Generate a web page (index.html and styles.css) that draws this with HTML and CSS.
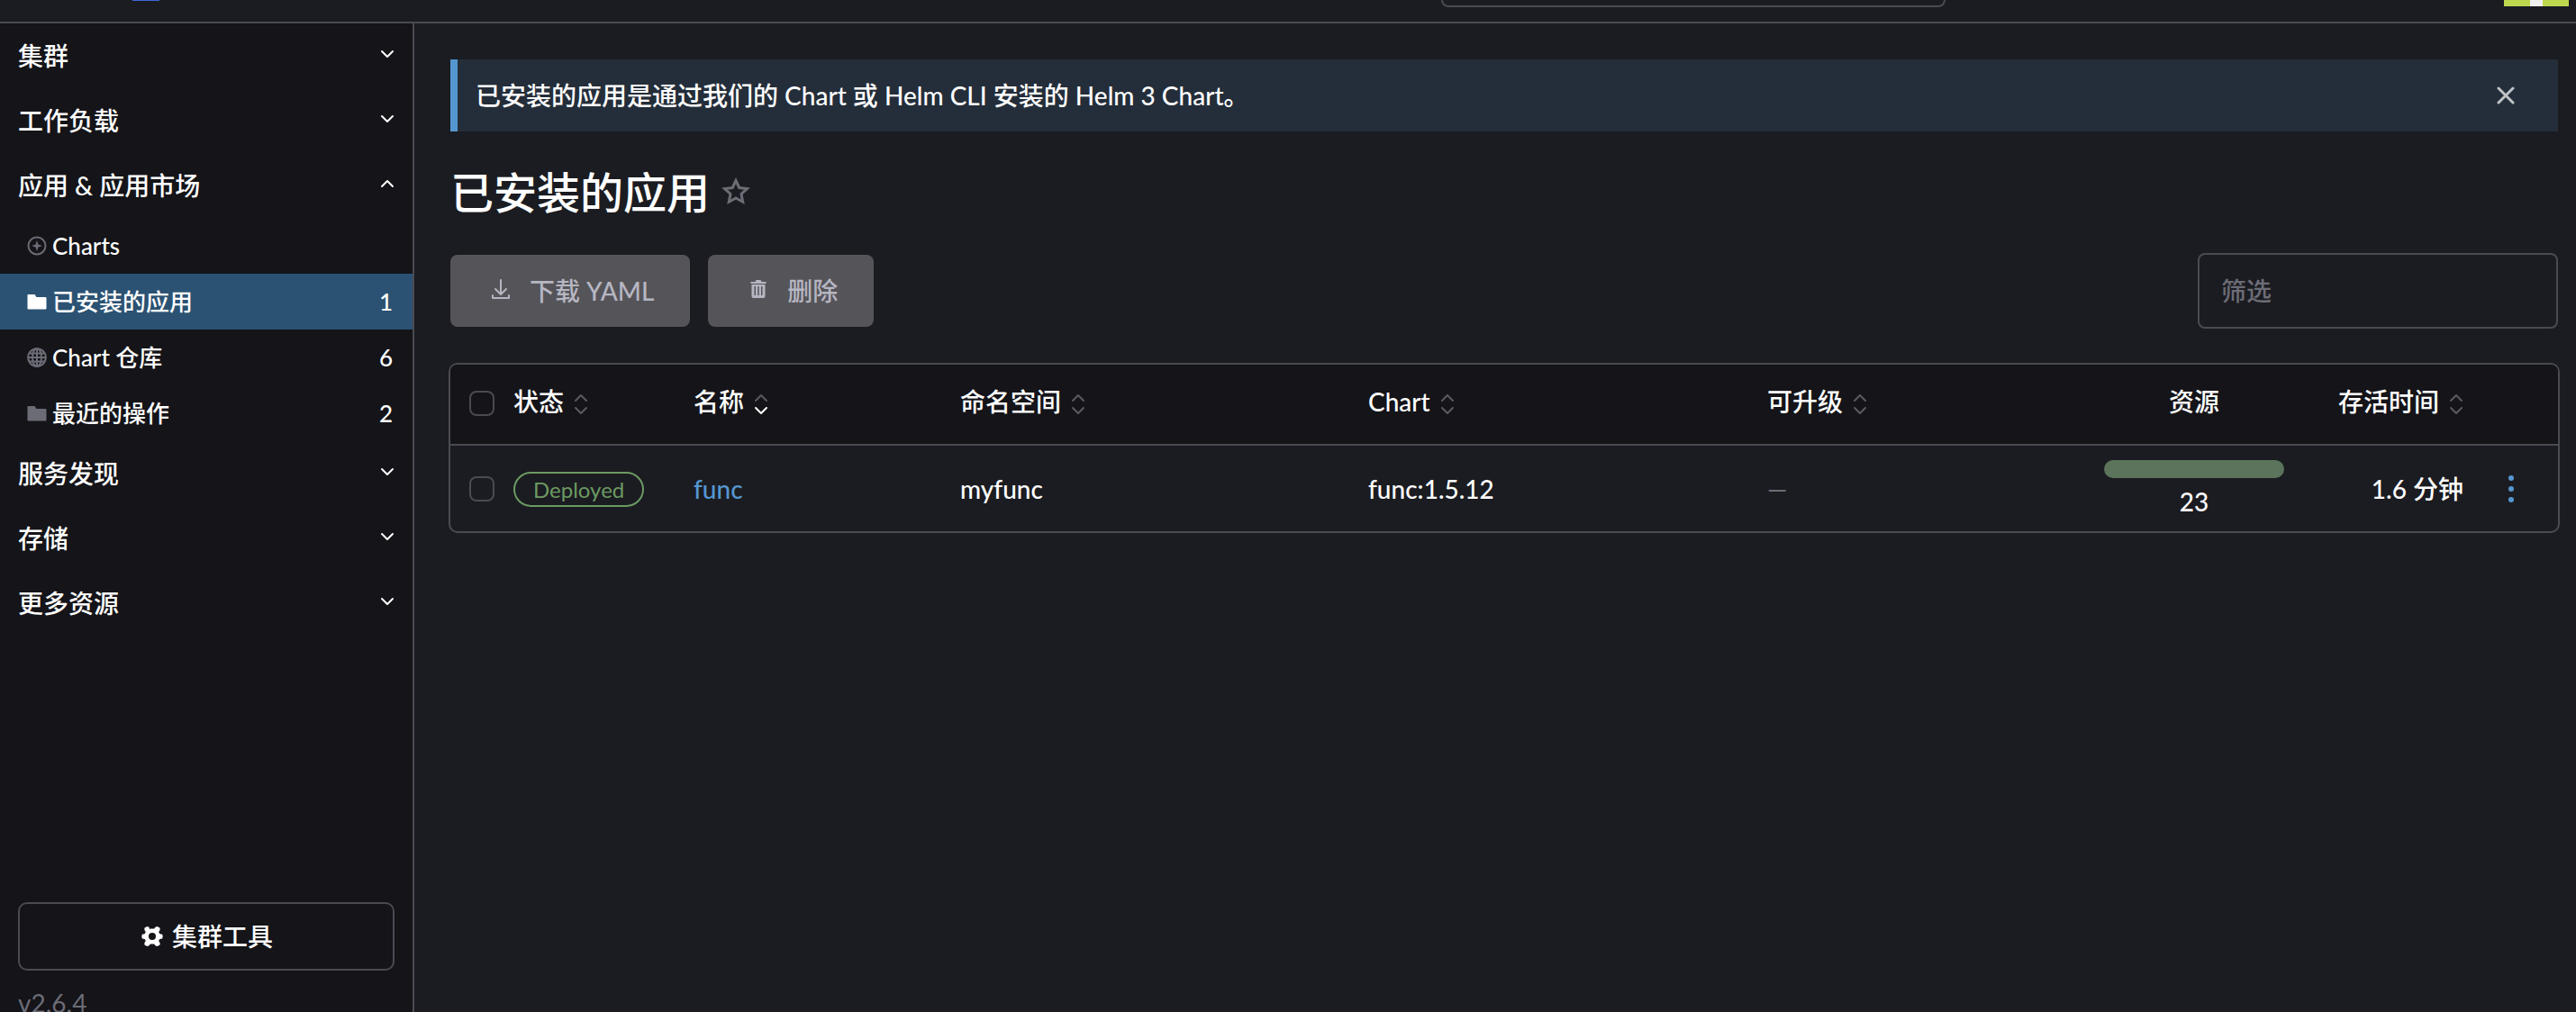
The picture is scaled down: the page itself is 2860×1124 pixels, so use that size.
FILE: index.html
```html
<!DOCTYPE html>
<html lang="zh-CN">
<head>
<meta charset="utf-8">
<meta name="viewport" content="width=device-width, initial-scale=1">
<title>已安装的应用</title>
<link rel="stylesheet" href="styles.css">
</head>
<body>
<svg class="sprite" aria-hidden="true">
  <symbol id="chevron" viewBox="0 0 16 10"><path d="M2 2l6 6 6-6" fill="none" stroke="currentColor" stroke-width="2" stroke-linecap="round" stroke-linejoin="round"/></symbol>
  <symbol id="folder" viewBox="0 0 22 18"><path d="M1 1h7.500l2 3H20.500a1 1 0 0 1 1 1V16.500a1 1 0 0 1-1 1H1.500a1 1 0 0 1-1-1V1.500z" fill="currentColor"/></symbol>
  <symbol id="sort" viewBox="0 0 16 24"><g fill="none" stroke-width="2" stroke-linecap="round" stroke-linejoin="round"><path class="sort-up" d="M2 8l6-6 6 6"/><path class="sort-down" d="M2 16l6 6 6-6"/></g></symbol>
</svg>
<div class="app">
  <header class="topbar">
    <span class="logo"></span>
    <select class="namespace-filter" aria-label="命名空间"></select>
    <span class="avatar"></span>
  </header>
  <nav class="sidebar">
    <button class="group" type="button">集群<svg class="chevron"><use href="#chevron"/></svg></button>
    <button class="group" type="button">工作负载<svg class="chevron"><use href="#chevron"/></svg></button>
    <button class="group" type="button" aria-expanded="true">应用 &amp; 应用市场<svg class="chevron open"><use href="#chevron"/></svg></button>
    <ul class="items">
      <li><a class="item" href="#charts">
        <svg class="item-icon" viewBox="0 0 22 22"><circle cx="11" cy="11" r="9.500" fill="none" stroke="currentColor" stroke-width="2"/><path d="M11 5l1.500 4.500L17 11l-4.500 1.500L11 17l-1.500-4.500L5 11l4.500-1.500z" fill="currentColor"/></svg>
        <span class="item-label">Charts</span></a></li>
      <li><a class="item active" href="#apps">
        <svg class="item-icon"><use href="#folder"/></svg>
        <span class="item-label">已安装的应用</span><span>1</span></a></li>
      <li><a class="item" href="#repos">
        <svg class="item-icon" viewBox="0 0 22 22"><g fill="none" stroke="currentColor" stroke-width="2"><circle cx="11" cy="11" r="9.800"/><ellipse cx="11" cy="11" rx="5" ry="9.800"/><path d="M11 1v20M1 11h20M3 6.500h16M3 15.500h16"/></g></svg>
        <span class="item-label">Chart 仓库</span><span>6</span></a></li>
      <li><a class="item" href="#operations">
        <svg class="item-icon"><use href="#folder"/></svg>
        <span class="item-label">最近的操作</span><span>2</span></a></li>
    </ul>
    <button class="group" type="button">服务发现<svg class="chevron"><use href="#chevron"/></svg></button>
    <button class="group" type="button">存储<svg class="chevron"><use href="#chevron"/></svg></button>
    <button class="group" type="button">更多资源<svg class="chevron"><use href="#chevron"/></svg></button>
    <div class="side-footer">
      <button class="tools" type="button">
        <svg class="gear" viewBox="0 0 24 24"><path fill="currentColor" fill-rule="evenodd" d="M9 4.300L8.600 1.800 6.200.900 3.300 2.700 3.500 5.200 4.800 7 3.600 9.200.800 9.700.300 12l.500 2.400 2.800.500 1.200 2.200-1.300 1.800-.2 2.400 2.900 1.800 2.400-.9 1.200-1.700h4.400l1.200 1.700 2.400.9 2.900-1.800-.2-2.400L19.200 17.100l1.200-2.200 2.800-.5.500-2.400-.5-2.300-2.800-.5L19.200 7l1.300-1.800.2-2.500L17.800.9l-2.400.9L14.200 3.500H9.800zM12 8a4 4 0 1 1 0 8 4 4 0 0 1 0-8z"/></svg>
        集群工具</button>
      <a class="version" href="#about">v2.6.4</a>
    </div>
  </nav>
  <main class="content">
    <div class="banner">
      <span>已安装的应用是通过我们的 Chart 或 Helm CLI 安装的 Helm 3 Chart。</span>
      <button class="close" type="button" aria-label="关闭"><svg viewBox="0 0 20 20"><path d="M2 2l16 16M18 2L2 18" stroke="currentColor" stroke-width="3" stroke-linecap="round"/></svg></button>
    </div>
    <div class="title">
      <h1>已安装的应用</h1>
      <button class="star" type="button" aria-label="收藏"><svg viewBox="0 0 32 31"><path d="M16 3.500l3.700 8 8.800 1-6.500 6 1.700 8.700L16 22.900l-7.700 4.300L10 18.500l-6.500-6 8.800-1z" fill="none" stroke="currentColor" stroke-width="3"/></svg></button>
    </div>
    <div class="toolbar">
      <button class="action" type="button" disabled>
        <svg viewBox="0 0 20 22"><path d="M10 1v15M4 11l6 6 6-6M1 18v3h18v-3" fill="none" stroke="currentColor" stroke-width="2" stroke-linecap="round" stroke-linejoin="round"/></svg>
        下载 YAML</button>
      <button class="action" type="button" disabled>
        <svg viewBox="0 0 20 22"><path fill="currentColor" fill-rule="evenodd" d="M1.500 3H6.500l1-2h5l1 2h5v2h-17zM2.500 6h15v13a2 2 0 0 1-2 2h-11a2 2 0 0 1-2-2zM5.500 8v10h1.500V8zM9.200 8v10h1.500V8zM13 8v10h1.500V8z"/></svg>
        删除</button>
      <input class="filter" type="search" placeholder="筛选" aria-label="筛选">
    </div>
    <div class="table-box">
      <table>
        <colgroup><col class="c-check"><col class="c-state"><col class="c-name"><col class="c-ns"><col class="c-chart"><col class="c-upgrade"><col class="c-res"><col class="c-age"><col class="c-menu"></colgroup>
        <thead>
          <tr>
            <th class="check"><input type="checkbox" aria-label="全选"></th>
            <th><span class="sortable">状态<svg class="sort"><use href="#sort"/></svg></span></th>
            <th><span class="sortable">名称<svg class="sort sorted"><use href="#sort"/></svg></span></th>
            <th><span class="sortable">命名空间<svg class="sort"><use href="#sort"/></svg></span></th>
            <th><span class="sortable">Chart<svg class="sort"><use href="#sort"/></svg></span></th>
            <th><span class="sortable">可升级<svg class="sort"><use href="#sort"/></svg></span></th>
            <th class="center">资源</th>
            <th class="right"><span class="sortable">存活时间<svg class="sort"><use href="#sort"/></svg></span></th>
            <th></th>
          </tr>
        </thead>
        <tbody>
          <tr>
            <td class="check"><input type="checkbox" aria-label="选择 func"></td>
            <td><span class="badge">Deployed</span></td>
            <td><a class="link" href="#func">func</a></td>
            <td>myfunc</td>
            <td>func:1.5.12</td>
            <td class="muted">—</td>
            <td class="center"><div class="bar"></div><div class="count">23</div></td>
            <td class="right">1.6 分钟</td>
            <td class="menu"><button class="dots" type="button" aria-label="操作"><svg viewBox="0 0 8 32"><g fill="currentColor"><circle cx="4" cy="4" r="3"/><circle cx="4" cy="16" r="3"/><circle cx="4" cy="28" r="3"/></g></svg></button></td>
          </tr>
        </tbody>
      </table>
    </div>
  </main>
</div>
</body>
</html>
```
FILE: styles.css
```css
:root {
  --body: #1b1c21;
  --nav: #141419;
  --border: #4a4b52;
  --muted: #6c6c76;
  --primary: #5596d0;
}
* { box-sizing: border-box; }
body {
  margin: 0;
  background: var(--body);
  color: #fff;
  font: 500 28px/40px Lato, "Noto Sans CJK SC", sans-serif;
}
button, input, select { font: inherit; color: inherit; }
button { border: 0; padding: 0; background: none; }
a { color: inherit; text-decoration: none; }
svg { display: block; flex: none; }
.sprite { position: absolute; width: 0; height: 0; }

.app {
  display: grid;
  grid-template: auto 1fr / 460px 1fr;
  height: 100vh;
  overflow: hidden;
}

.topbar {
  grid-column: 1 / -1;
  display: flex;
  align-items: flex-end;
  height: 26px;
  padding: 0 8px 16px 147px;
  border-bottom: 2px solid var(--border);
  overflow: hidden;
}
.logo { width: 30px; height: 8px; border-top: 1px solid #3f66d8; }
.namespace-filter {
  appearance: none;
  width: 560px;
  height: 80px;
  margin: 0 620px 0 auto;
  background: transparent;
  border: 2px solid var(--border);
  border-radius: 8px;
}
.avatar {
  width: 72px;
  height: 72px;
  margin-bottom: 1px;
  background: linear-gradient(90deg, #bcd74e 29px, #f0f0f0 29px 43px, #bcd74e 43px);
}

.sidebar {
  display: flex;
  flex-direction: column;
  min-height: 0;
  background: var(--nav);
  border-right: 2px solid var(--border);
}
.group {
  display: flex;
  align-items: center;
  justify-content: space-between;
  height: 72px;
  flex: none;
  padding: 0 20px;
  text-align: left;
}
.chevron { width: 16px; height: 10px; margin-bottom: 4px; }
.open { transform: scaleY(-1); }
.items { list-style: none; margin: 0; padding: 0; font-size: 26px; }
.item {
  display: flex;
  align-items: center;
  height: 62px;
  padding: 0 22px 0 30px;
}
.item-icon { width: 22px; height: 22px; margin-right: 6px; color: var(--muted); }
.item-label { flex: 1; }
.active { background: #2b5272; }
.active .item-icon { color: #fff; }
.side-footer {
  display: flex;
  flex-direction: column;
  margin-top: auto;
  padding: 0 20px;
}
.tools {
  display: flex;
  align-items: center;
  justify-content: center;
  gap: 10px;
  height: 76px;
  padding-left: 2px;
  border: 2px solid var(--border);
  border-radius: 10px;
}
.gear { width: 24px; height: 24px; }
.version { height: 30px; margin-top: 16px; color: var(--muted); font-weight: 400; }

.content { padding: 40px 20px 40px 40px; min-width: 0; }
.banner {
  display: flex;
  align-items: center;
  justify-content: space-between;
  height: 80px;
  padding: 0 48px 0 20px;
  background: #242e3a;
  border-left: 8px solid var(--primary);
}
.close { color: #c0c3c7; }
.close svg { width: 20px; height: 20px; }
.title { display: flex; align-items: center; gap: 13px; height: 60px; margin: 38px 0 37px; }
h1 { margin: 0; font-size: 48px; line-height: 60px; font-weight: 500; }
.star { color: var(--muted); padding-bottom: 4px; }
.star svg { width: 32px; height: 31px; }
.toolbar { display: flex; align-items: center; gap: 20px; margin-bottom: 38px; }
.action {
  display: flex;
  align-items: center;
  gap: 22px;
  height: 80px;
  padding: 0 40px 0 46px;
  border-radius: 8px;
  background: #555459;
  color: #b6b6c2;
}
.action svg { width: 20px; height: 22px; margin-bottom: 4px; }
.filter {
  appearance: none;
  width: 400px;
  height: 84px;
  margin-left: auto;
  padding: 0 24px;
  background: transparent;
  border: 2px solid var(--border);
  border-radius: 8px;
}
.filter::placeholder { color: var(--muted); }

.table-box {
  margin: 0 -2px;
  border: 2px solid var(--border);
  border-radius: 10px;
  overflow: hidden;
}
table { width: 100%; table-layout: fixed; border-spacing: 0; }
.c-check { width: 60px; }
.c-state { width: 200px; }
.c-name { width: 296px; }
.c-ns { width: 453px; }
.c-chart { width: 443px; }
.c-upgrade { width: 374px; }
.c-res { width: 220px; }
.c-age { width: 199px; }
.c-menu { width: 95px; }
th, td { padding: 0 10px; text-align: left; font-weight: 500; }
th { height: 90px; padding-bottom: 6px; background: var(--nav); border-bottom: 2px solid var(--border); }
td { height: 95px; }
.check { padding: 0 0 2px 21px; }
td.check { padding-bottom: 0; }
.center { text-align: center; }
.right { text-align: right; }
.sortable { display: inline-flex; align-items: center; gap: 11px; }
.sort { width: 16px; height: 24px; margin-top: 6px; --up: #5a5a61; --down: #5a5a61; }
.sorted { --down: #fff; }
.sort-up { stroke: var(--up); }
.sort-down { stroke: var(--down); }
input[type="checkbox"] {
  appearance: none;
  display: block;
  width: 28px;
  height: 28px;
  margin: 0;
  border: 2px solid var(--border);
  border-radius: 8px;
}
.badge {
  display: inline-block;
  padding: 0 20px;
  border: 2px solid #6b9a62;
  border-radius: 20px;
  color: #6b9a62;
  font-size: 24px;
  font-weight: 400;
  line-height: 35px;
}
.link { color: var(--primary); }
.muted { color: var(--muted); }
.bar { height: 20px; border-radius: 10px; background: #5b745b; }
.count { margin-top: 8px; line-height: 36px; }
.menu { padding-left: 39px; }
.dots { display: block; color: var(--primary); }
.dots svg { width: 8px; height: 32px; }
```
